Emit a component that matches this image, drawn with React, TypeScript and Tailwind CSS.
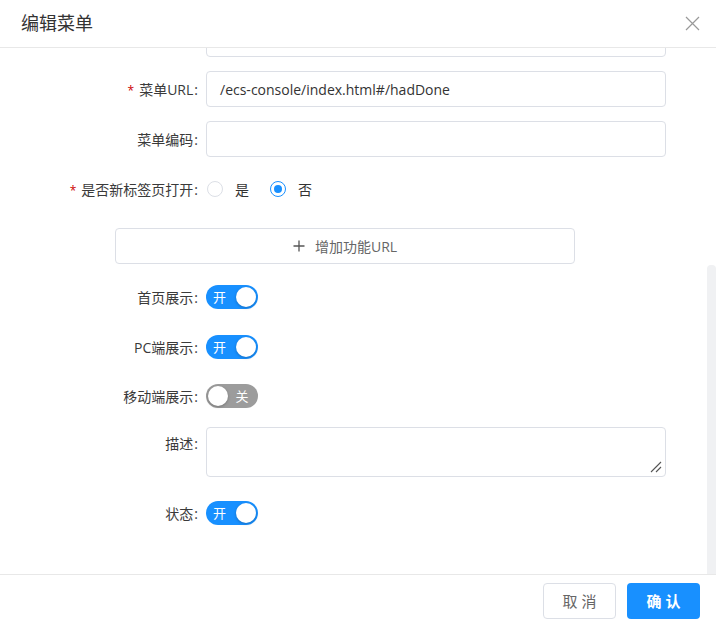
import { ReactNode } from "react";

const FONT = { fontFamily: '"Open Sans", "Noto Sans CJK SC", sans-serif' };

function Label({ children, required }: { children: ReactNode; required?: boolean }) {
  return (
    <div className="w-[206px] shrink-0 pr-[8px] text-right text-[14px] text-[#3a3a3a]">
      {required ? <span className="mr-[5px] text-[12px] text-[#c00]">*</span> : null}
      {children}
      <span className="ml-[1px]">:</span>
    </div>
  );
}

function Input({ value }: { value?: string }) {
  return (
    <div className="flex h-[36px] w-[460px] items-center rounded-[4px] border border-[#dcdfe6] bg-white px-[13px] text-[14px] text-[#333]">
      {value}
    </div>
  );
}

function Switch({ on }: { on: boolean }) {
  return (
    <div
      className={`flex h-[24px] w-[52px] items-center rounded-full ${
        on ? "flex-row bg-[#1890ff] pl-[7px] pr-[2px]" : "flex-row-reverse bg-[#9c9c9c] pl-[2px] pr-[2px]"
      }`}
    >
      <span className={`flex-1 text-[13px] leading-none text-white ${on ? "text-left" : "text-center"}`}>
        {on ? "开" : "关"}
      </span>
      <span className="h-[20px] w-[20px] rounded-full bg-white shadow-[0_1px_3px_rgba(0,0,0,0.25)]" />
    </div>
  );
}

export default function App() {
  return (
    <div className="relative h-[632px] w-[716px] overflow-hidden bg-white" style={FONT}>
      {/* header */}
      <div className="flex h-[48px] items-center justify-between border-b border-[#e8e8e8] pl-[21px] pr-[16px]">
        <span className="text-[18px] text-[#333]">编辑菜单</span>
        <svg width="15" height="15" viewBox="0 0 15 15" className="text-[#999]">
          <path d="M1 1 L14 14 M14 1 L1 14" stroke="currentColor" strokeWidth="1.2" fill="none" />
        </svg>
      </div>

      {/* body */}
      <div className="h-[526px] overflow-hidden">
        <div className="flex h-[9px] items-end overflow-hidden pl-[206px]">
          <div className="h-[36px] w-[460px] shrink-0 rounded-[4px] border border-[#dcdfe6]" />
        </div>

        <div className="mt-[14px] flex items-center">
          <Label required>菜单URL</Label>
          <Input value="/ecs-console/index.html#/hadDone" />
        </div>

        <div className="mt-[14px] flex items-center">
          <Label>菜单编码</Label>
          <Input />
        </div>

        <div className="mt-[14px] flex h-[36px] items-center">
          <Label required>是否新标签页打开</Label>
          <div className="flex items-center text-[14px] text-[#333]">
            <span className="ml-[1px] h-[16px] w-[16px] rounded-full border border-[#dcdfe6]" />
            <span className="ml-[12px]">是</span>
            <span className="ml-[21px] flex h-[16px] w-[16px] items-center justify-center rounded-full border border-[#1890ff]">
              <span className="h-[8px] w-[8px] rounded-full bg-[#1890ff]" />
            </span>
            <span className="ml-[12px]">否</span>
          </div>
        </div>

        <div className="mt-[21px] pl-[115px]">
          <div className="flex h-[36px] w-[460px] items-center justify-center gap-[10px] rounded-[4px] border border-[#dcdfe6] text-[14px] text-[#666]">
            <svg width="12" height="12" viewBox="0 0 12 12">
              <path d="M6 0.5 V11.5 M0.5 6 H11.5" stroke="#555" strokeWidth="1.3" />
            </svg>
            <span>增加功能URL</span>
          </div>
        </div>

        <div className="mt-[15px] flex h-[36px] items-center">
          <Label>首页展示</Label>
          <Switch on />
        </div>
        <div className="mt-[14px] flex h-[36px] items-center">
          <Label>PC端展示</Label>
          <Switch on />
        </div>
        <div className="mt-[13px] flex h-[36px] items-center">
          <Label>移动端展示</Label>
          <Switch on={false} />
        </div>

        <div className="mt-[13px] flex items-start">
          <div className="pt-[6px]">
            <Label>描述</Label>
          </div>
          <div className="relative h-[50px] w-[460px] rounded-[4px] border border-[#dcdfe6]">
            <svg width="12" height="12" viewBox="0 0 12 12" className="absolute bottom-[3px] right-[3px]">
              <path d="M11 1 L1 11 M11 6 L6 11" stroke="#555" strokeWidth="1.1" />
            </svg>
          </div>
        </div>

        <div className="mt-[18px] flex h-[36px] items-center">
          <Label>状态</Label>
          <Switch on />
        </div>
      </div>

      {/* footer */}
      <div className="flex justify-end gap-[11px] border-t border-[#e8e8e8] pr-[16px] pt-[8px]">
        <button
          type="button"
          className="h-[36px] w-[73px] rounded-[4px] border border-[#dcdfe6] bg-white pl-[4px] text-[15px] tracking-[4px] text-[#666]"
        >
          取消
        </button>
        <button
          type="button"
          className="h-[36px] w-[73px] rounded-[4px] bg-[#1890ff] pl-[4px] text-[15px] font-bold tracking-[4px] text-white"
        >
          确认
        </button>
      </div>

      {/* scrollbar thumb */}
      <div className="absolute right-0 top-[265px] h-[309px] w-[9px] rounded-t-[4px] bg-[#f0f1f3]" />
    </div>
  );
}
